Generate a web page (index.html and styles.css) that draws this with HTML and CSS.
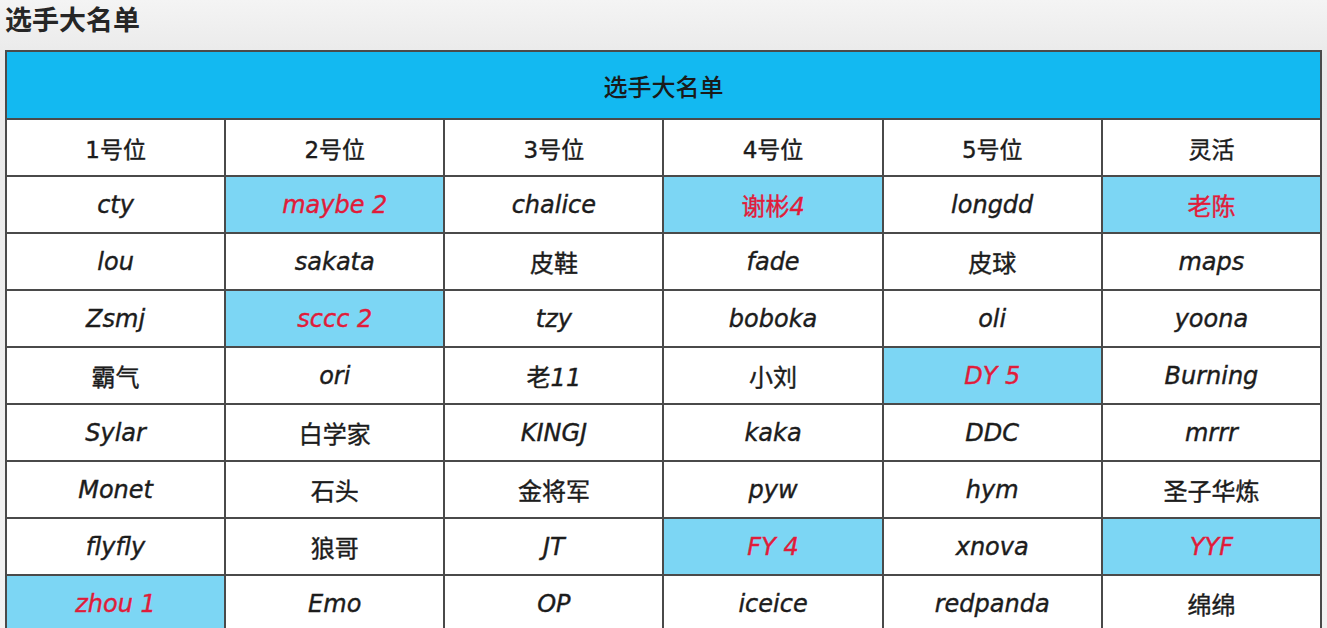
FILE: index.html
```html
<!DOCTYPE html>
<html lang="zh">
<head>
<meta charset="utf-8">
<link rel="stylesheet" href="styles.css">
</head>
<body>
<div class="page">
  <h1 class="title">选手大名单</h1>
  <table class="roster">
    <thead>
      <tr><th colspan="6" class="banner">选手大名单</th></tr>
    </thead>
    <tbody>
      <tr class="pos"><td>1号位</td><td>2号位</td><td>3号位</td><td>4号位</td><td>5号位</td><td>灵活</td></tr>
      <tr><td>cty</td><td class="hl">maybe 2</td><td>chalice</td><td class="hl">谢彬4</td><td>longdd</td><td class="hl">老陈</td></tr>
      <tr><td>lou</td><td>sakata</td><td>皮鞋</td><td>fade</td><td>皮球</td><td>maps</td></tr>
      <tr><td>Zsmj</td><td class="hl">sccc 2</td><td>tzy</td><td>boboka</td><td>oli</td><td>yoona</td></tr>
      <tr><td>霸气</td><td>ori</td><td>老11</td><td>小刘</td><td class="hl">DY 5</td><td>Burning</td></tr>
      <tr><td>Sylar</td><td>白学家</td><td>KINGJ</td><td>kaka</td><td>DDC</td><td>mrrr</td></tr>
      <tr><td>Monet</td><td>石头</td><td>金将军</td><td>pyw</td><td>hym</td><td>圣子华炼</td></tr>
      <tr><td>flyfly</td><td>狼哥</td><td>JT</td><td class="hl">FY 4</td><td>xnova</td><td class="hl">YYF</td></tr>
      <tr><td class="hl">zhou 1</td><td>Emo</td><td>OP</td><td>iceice</td><td>redpanda</td><td>绵绵</td></tr>
    </tbody>
  </table>
</div>
</body>
</html>
```
FILE: styles.css
```css
html, body {
  margin: 0;
  padding: 0;
  height: 100%;
  overflow: hidden;
}
body {
  background: linear-gradient(#f4f4f4, #e9e9e9 60px, #f2f2f2);
  font-family: "DejaVu Sans", "Noto Sans CJK SC", sans-serif;
  color: #1e1e1e;
  font-synthesis: none;
}
.page {
  padding: 0 5px;
}
.title {
  margin: 0;
  height: 50px;
  line-height: 38px;
  font-family: "Noto Sans CJK SC", sans-serif;
  font-size: 27px;
  font-weight: 700;
  color: #262626;
}
.roster {
  width: 1317px;
  border-collapse: collapse;
  table-layout: fixed;
  background: #ffffff;
}
.roster th, .roster td {
  border: 2px solid #4a4a4a;
  text-align: center;
  padding: 0;
}
.banner {
  height: 66px;
  background: #13b9f1;
  font-family: "Noto Sans CJK SC", sans-serif;
  font-size: 24px;
  font-weight: 500;
  color: #1a1a1a;
}
.roster td {
  height: 55px;
  font-size: 24px;
  font-style: italic;
  font-weight: 400;
  font-family: "DejaVu Sans", "Noto Sans CJK SC", sans-serif;
  color: #1c1c1c;
  -webkit-text-stroke: 0.4px currentColor;
}
.roster .pos td {
  font-style: normal;
  font-size: 23px;
}
.roster td.hl {
  background: #7cd6f4;
  color: #e01c3a;
}
```
